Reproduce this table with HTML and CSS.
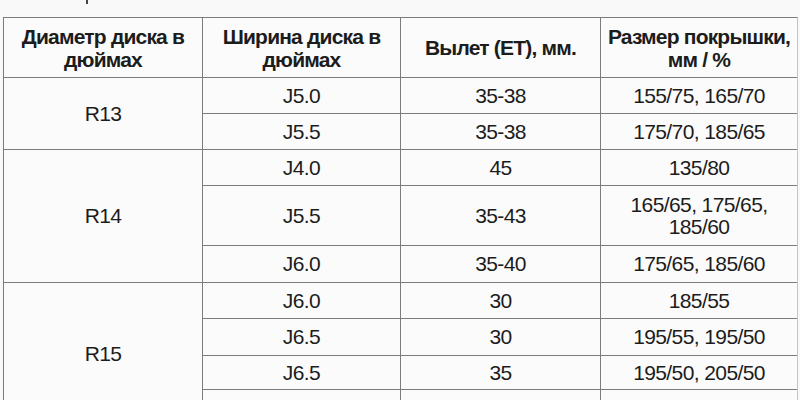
FILE: index.html
```html
<!DOCTYPE html>
<html lang="ru">
<head>
<meta charset="utf-8">
<link rel="stylesheet" href="styles.css">
</head>
<body>
<div class="caption"><span class="caption-mark"></span></div>
<div class="sheet">
  <div class="cell head">Диаметр диска в дюймах</div>
  <div class="cell head">Ширина диска в дюймах</div>
  <div class="cell head">Вылет (ЕТ), мм.</div>
  <div class="cell head">Размер покрышки, мм / %</div>

  <div class="cell span2">R13</div>
  <div class="cell">J5.0</div><div class="cell">35-38</div><div class="cell">155/75, 165/70</div>
  <div class="cell">J5.5</div><div class="cell">35-38</div><div class="cell">175/70, 185/65</div>

  <div class="cell span3">R14</div>
  <div class="cell">J4.0</div><div class="cell">45</div><div class="cell">135/80</div>
  <div class="cell">J5.5</div><div class="cell">35-43</div><div class="cell">165/65, 175/65, 185/60</div>
  <div class="cell">J6.0</div><div class="cell">35-40</div><div class="cell">175/65, 185/60</div>

  <div class="cell span4">R15</div>
  <div class="cell">J6.0</div><div class="cell">30</div><div class="cell">185/55</div>
  <div class="cell">J6.5</div><div class="cell">30</div><div class="cell">195/55, 195/50</div>
  <div class="cell">J6.5</div><div class="cell">35</div><div class="cell">195/50, 205/50</div>
  <div class="cell"></div><div class="cell"></div><div class="cell"></div>
</div>
</body>
</html>
```

FILE: styles.css
```css
html, body {
  margin: 0;
  padding: 0;
  background: #f9f9f9;
  overflow: hidden;
}
body {
  width: 800px;
  height: 400px;
  font-family: "Liberation Sans", Arial, sans-serif;
  color: #1c1c1c;
}
.caption {
  height: 17px;
  padding-left: 86px;
}
.caption-mark {
  display: block;
  width: 2px;
  height: 4px;
  background: #444;
}
.sheet {
  margin-left: 3px;
  width: 793px;
  display: grid;
  grid-template-columns: 198px 197px 199px 196px;
  grid-template-rows: 59px 35px 35px 35px 59px 36px 35px 36px 33px 35px;
  gap: 1px;
  background: #7c7c7c;
  border: 1px solid #7c7c7c;
  border-right-color: #c4c4c4;
}
.cell {
  background: #fbfbfb;
  display: flex;
  align-items: center;
  justify-content: center;
  text-align: center;
  font-size: 21px;
  letter-spacing: -0.6px;
  line-height: 22px;
  padding: 0 4px;
}
.head {
  font-weight: bold;
  letter-spacing: -0.8px;
  line-height: 23px;
  padding: 0 2px;
}
.span2 { grid-row: span 2; }
.span3 { grid-row: span 3; }
.span4 { grid-row: span 4; }
```
